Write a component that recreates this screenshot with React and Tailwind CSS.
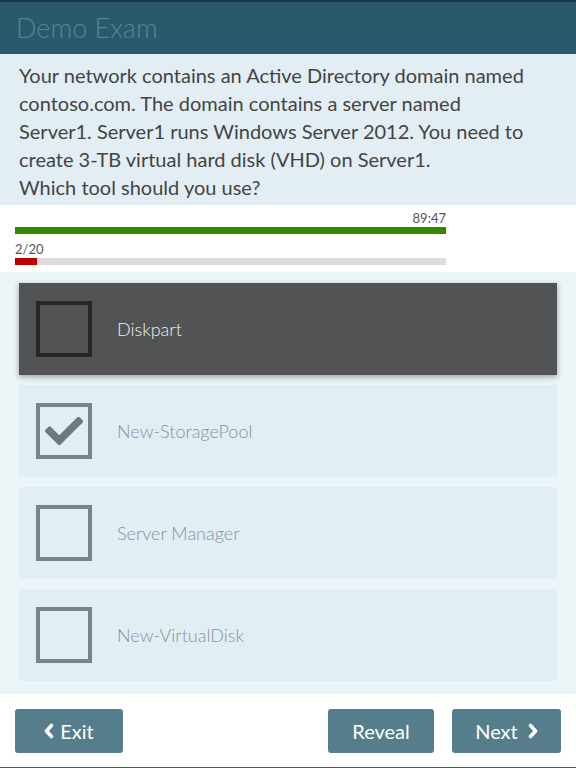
import { FaCheck } from 'react-icons/fa';

const OPTIONS = [
  { label: 'Diskpart', active: true, checked: false },
  { label: 'New-StoragePool', active: false, checked: true },
  { label: 'Server Manager', active: false, checked: false },
  { label: 'New-VirtualDisk', active: false, checked: false },
];

function Chevron({ dir }) {
  return (
    <svg viewBox="0 0 10 16" className="w-[10px] h-[16px]" fill="none" stroke="currentColor" strokeWidth={3.6} strokeLinecap="round" strokeLinejoin="round">
      {dir === 'left' ? <path d="M7.5 2.5 2.5 8l5 5.5" /> : <path d="M2.5 2.5 7.5 8l-5 5.5" />}
    </svg>
  );
}

function Option({ label, active, checked }) {
  return (
    <div
      className={`h-[92px] flex items-center pl-[17px] ${
        active ? 'bg-[#515354] shadow-[0_2px_6px_rgba(0,0,0,0.35)]' : 'bg-[#e1eef3]'
      }`}
    >
      <div
        className={`w-[56px] h-[56px] border-[4px] flex items-center justify-center ${
          active ? 'border-[#262828]' : 'border-[#7a8588]'
        }`}
      >
        {checked && <FaCheck className="w-[38px] h-[38px] text-[#6f797c]" />}
      </div>
      <span className={`ml-[25px] text-[18px] font-light ${active ? 'text-[#f0f0f0]' : 'text-[#87939a]'}`}>
        {label}
      </span>
    </div>
  );
}

export default function App() {
  return (
    <div className="w-[576px] h-[768px] flex flex-col bg-white" style={{ fontFamily: 'Lato, "Open Sans", sans-serif' }}>
      <div className="h-[54px] shrink-0 bg-[#285a6c] border-t-2 border-[#1a3946] flex items-center pl-[16px]">
        <h1 className="text-[27px] font-light text-[#4f8697] leading-none -mt-[2px]">Demo Exam</h1>
      </div>

      <div className="bg-[#e2eef3] px-[19px] pt-[7px] pb-[4px] text-[20px] leading-[28px] text-[#444] whitespace-nowrap">
        Your network contains an Active Directory domain named
        <br />
        contoso.com. The domain contains a server named
        <br />
        Server1. Server1 runs Windows Server 2012. You need to
        <br />
        create 3-TB virtual hard disk (VHD) on Server1.
        <br />
        Which tool should you use?
      </div>

      <div className="h-[67px] shrink-0 bg-white px-[15px] pt-[6px]">
        <div className="w-[431px]">
          <div className="text-right text-[13px] leading-[15px] text-[#555]">89:47</div>
          <div className="h-[7px] bg-[#338a00] mt-[1px]" />
          <div className="text-[13px] leading-[15px] text-[#555] mt-[8px]">2/20</div>
          <div className="h-[7px] bg-[#e0dcdc] mt-[1px]">
            <div className="h-full w-[22px] bg-[#c00000]" />
          </div>
        </div>
      </div>

      <div className="flex-1 bg-[#ebf5f8] px-[19px] pt-[11px] flex flex-col gap-[10px]">
        {OPTIONS.map(o => (
          <Option key={o.label} {...o} />
        ))}
      </div>

      <div className="h-[74px] shrink-0 bg-white border-b border-[#555] flex items-start pt-[15px] px-[15px]">
        <button className="w-[108px] h-[44px] rounded-[3px] bg-[#567d8c] text-white text-[20px] flex items-center justify-center gap-[6px]">
          <Chevron dir="left" />
          Exit
        </button>
        <div className="flex-1" />
        <button className="w-[106px] h-[44px] rounded-[3px] bg-[#567d8c] text-white text-[20px]">Reveal</button>
        <button className="ml-[18px] w-[109px] h-[44px] rounded-[3px] bg-[#567d8c] text-white text-[20px] flex items-center justify-center gap-[10px]">
          Next
          <Chevron dir="right" />
        </button>
      </div>
    </div>
  );
}
